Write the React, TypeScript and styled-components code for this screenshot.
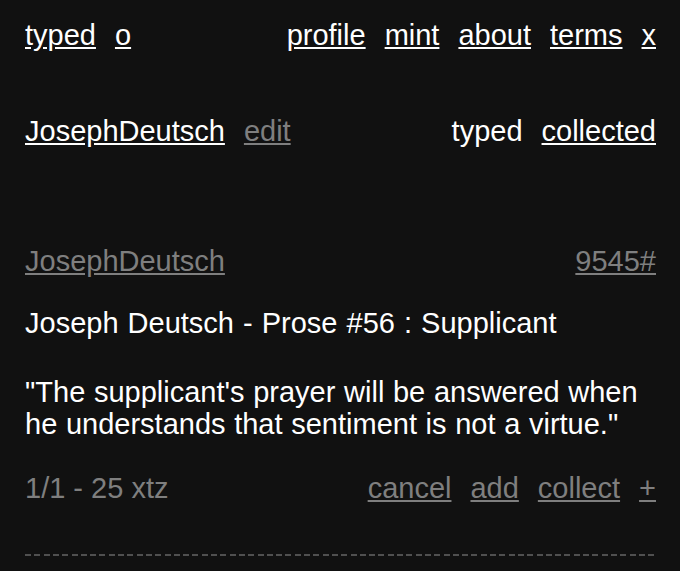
import React from 'react';
import styled, { createGlobalStyle } from 'styled-components';

const GlobalStyle = createGlobalStyle`
  body {
    margin: 0;
    background-color: #111111;
    color: #ffffff;
    font-family: 'Liberation Sans', Arial, sans-serif;
    font-size: 29px;
    line-height: 32px;
  }
`;

const Page = styled.div`
  display: flex;
  flex-direction: column;
  padding: 19px 24px 0 25px;
`;

const Row = styled.div`
  display: flex;
  flex-direction: row;
  justify-content: space-between;
  align-items: center;
`;

const Group = styled.div`
  display: flex;
  gap: 19px;
`;

const Link = styled.a<{ $muted?: boolean }>`
  color: ${(p) => (p.$muted ? '#7f7f7f' : '#ffffff')};
  text-decoration: underline;
  cursor: pointer;
`;

const Plain = styled.span`
  color: #ffffff;
`;

const UserRow = styled(Row)`
  margin-top: 64px;
`;

const Post = styled.div`
  display: flex;
  flex-direction: column;
  margin-top: 98px;
`;

const Title = styled.div`
  margin-top: 30px;
  word-spacing: 1px;
`;

const Body = styled.div`
  margin-top: 37px;
  line-height: 32.4px;
  word-spacing: 0.6px;
`;

const Footer = styled(Row)`
  margin-top: 31px;
  color: #7f7f7f;
`;

const Divider = styled.div`
  margin-top: 50px;
  height: 2px;
  background: repeating-linear-gradient(to right, #505050 0 6px, transparent 6px 9.3px);
`;

const App: React.FC = () => {
  return (
    <>
      <GlobalStyle />
      <Page>
        <Row>
          <Group>
            <Link>typed</Link>
            <Link>o</Link>
          </Group>
          <Group>
            <Link>profile</Link>
            <Link>mint</Link>
            <Link>about</Link>
            <Link>terms</Link>
            <Link>x</Link>
          </Group>
        </Row>
        <UserRow>
          <Group>
            <Link>JosephDeutsch</Link>
            <Link $muted>edit</Link>
          </Group>
          <Group>
            <Plain>typed</Plain>
            <Link>collected</Link>
          </Group>
        </UserRow>
        <Post>
          <Row>
            <Link $muted>JosephDeutsch</Link>
            <Link $muted>9545#</Link>
          </Row>
          <Title>Joseph Deutsch - Prose #56 : Supplicant</Title>
          <Body>
            "The supplicant's prayer will be answered when he understands that sentiment is not a virtue."
          </Body>
          <Footer>
            <span>1/1 - 25 xtz</span>
            <Group>
              <Link $muted>cancel</Link>
              <Link $muted>add</Link>
              <Link $muted>collect</Link>
              <Link $muted>+</Link>
            </Group>
          </Footer>
          <Divider />
        </Post>
      </Page>
    </>
  );
};

export default App;
